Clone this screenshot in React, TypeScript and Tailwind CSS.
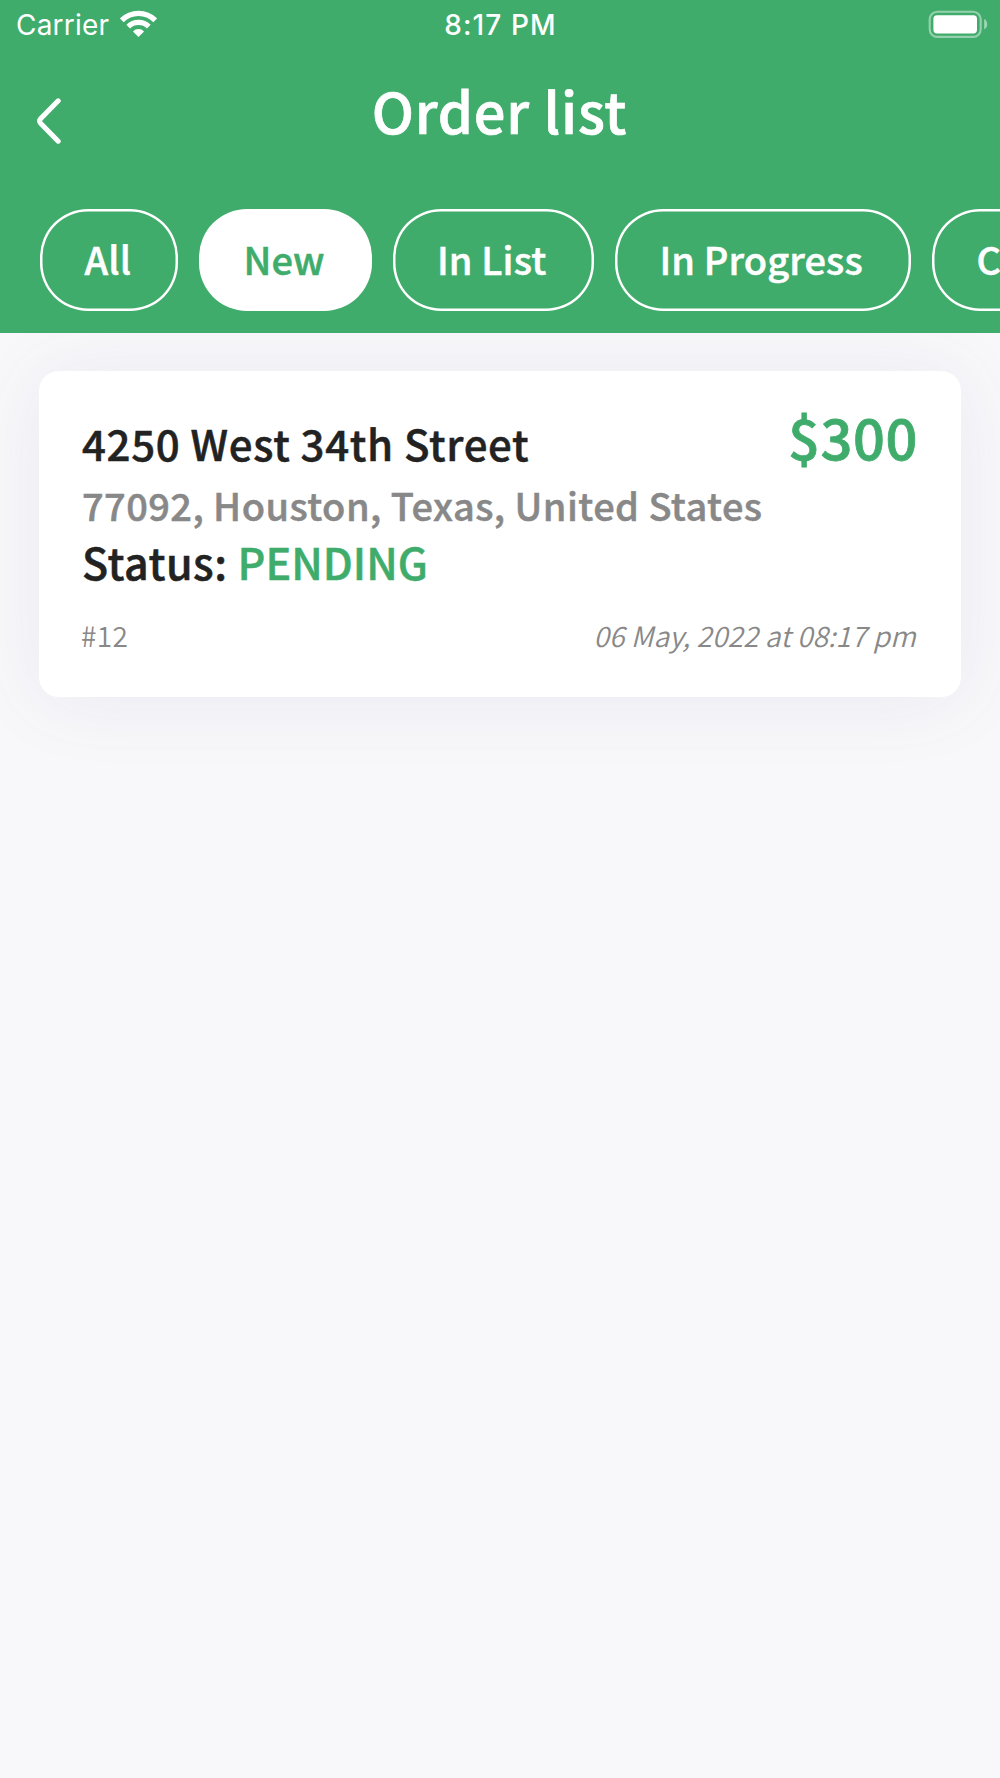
import { useState } from 'react';

interface Filter {
  label: string;
  width: string;
}

interface Order {
  id: number;
  street: string;
  address: string;
  status: string;
  price: string;
  date: string;
}

const filters: Filter[] = [
  { label: 'All', width: 'w-[138px]' },
  { label: 'New', width: 'w-[172.5px]' },
  { label: 'In List', width: 'w-[201.5px]' },
  { label: 'In Progress', width: 'w-[296px]' },
  { label: 'C', width: 'w-[280px]' },
];

const orders: Order[] = [
  {
    id: 12,
    street: '4250 West 34th Street',
    address: '77092, Houston, Texas, United States',
    status: 'PENDING',
    price: '$300',
    date: '06 May, 2022 at 08:17 pm',
  },
];

function WifiIcon() {
  return (
    <svg width="37" height="28" viewBox="0 0 37 28" fill="none" stroke="white">
      <path d="M1.8 10.3a23.6 23.6 0 0 1 33.4 0" strokeWidth="5.4" />
      <path d="M8.2 16.7a14.6 14.6 0 0 1 20.6 0" strokeWidth="5.2" />
      <path d="M18.5 27l-5.6-5.6a8 8 0 0 1 11.2 0z" fill="white" stroke="none" />
    </svg>
  );
}

function BatteryIcon() {
  return (
    <svg width="60" height="28" viewBox="0 0 60 28" fill="white">
      <rect x="1.7" y="1.7" width="51" height="25.2" rx="7.6" fill="none" stroke="white" strokeWidth="2.1" opacity="0.45" />
      <rect x="5.4" y="5.2" width="43.6" height="18.2" rx="3.6" />
      <path d="M56.2 9v10.4c1.8-.9 3-2.8 3-5.2s-1.2-4.3-3-5.2z" opacity="0.5" />
    </svg>
  );
}

function StatusBar() {
  return (
    <div className="grid h-[51px] grid-cols-[1fr_auto_1fr] items-center pl-4 pr-3 font-['Inter',sans-serif] text-[28px] leading-[51px] text-white">
      <div className="flex h-[51px] items-start">
        <span className="w-[104px] font-[380] tracking-[0.2px]">Carrier</span>
        <span className="pt-[10px]">
          <WifiIcon />
        </span>
      </div>
      <span className="mr-[3px] text-center font-medium tracking-[1.1px] whitespace-nowrap">8:17 PM</span>
      <div className="flex justify-end pb-[3px]">
        <BatteryIcon />
      </div>
    </div>
  );
}

function OrderCard({ order }: { order: Order }) {
  return (
    <article className="h-[326px] rounded-[20px] bg-white px-[43px] pt-10 shadow-[0_4px_76px_rgba(100,80,160,0.09)]">
      <div className="flex items-start justify-between [-webkit-text-stroke:0.5px]">
        <h2 className="text-[42px] leading-[64px] font-medium tracking-[0.67px] text-[#222]">{order.street}</h2>
        <span className="text-[56px] leading-[50px] font-medium tracking-[0.6px] text-[#40ac6c] [-webkit-text-stroke:0.8px]">
          {order.price}
        </span>
      </div>
      <p className="text-[38px] leading-[59px] font-medium tracking-[0.42px] text-[#888] [-webkit-text-stroke:0.5px]">
        {order.address}
      </p>
      <p className="flex text-[43px] leading-[55px] font-medium text-[#222] [-webkit-text-stroke:0.5px]">
        <span className="mr-[10px] tracking-[0.5px]">Status:</span>
        <span className="text-[#40ac6c]">{order.status}</span>
      </p>
      <div className="mt-[26px] flex justify-between text-[28px] leading-[41px] font-[350] text-[#888]">
        <span className="-ml-px tracking-[0.4px]">#{order.id}</span>
        <span className="mr-[2px] tracking-[0.1px] italic">{order.date}</span>
      </div>
    </article>
  );
}

export default function App() {
  const [active, setActive] = useState('New');

  return (
    <div className="min-h-[1778px] w-[1000px] overflow-hidden bg-[#f8f8fa] font-['Noto_Sans_CJK_SC',sans-serif]">
      <header className="relative z-10 h-[333px] bg-[#40ac6c]">
        <StatusBar />
        <div className="grid h-[118px] grid-cols-[100px_1fr_100px] items-center text-white">
          <button className="pt-[21px] pl-9" aria-label="Back">
            <svg width="26" height="46" viewBox="0 0 26 46" fill="none" stroke="white" strokeWidth="5" strokeLinecap="round">
              <path d="M22.2 2.8L4.8 20.5q-2.3 2.5 0 5L22.2 43.2" />
            </svg>
          </button>
          <h1 className="-ml-px text-center text-[56px] leading-[118px] font-medium tracking-[0.8px] [-webkit-text-stroke:0.7px]">
            Order list
          </h1>
        </div>
        <nav className="mt-10 flex gap-[21px] overflow-hidden pl-10">
          {filters.map(({ label, width }) => (
            <button
              key={label}
              onClick={() => setActive(label)}
              className={`${width} h-[102px] shrink-0 rounded-[48px] pb-[2px] pl-[44.5px] text-left text-[38px] leading-[100px] font-medium tracking-[0.1px] whitespace-nowrap [-webkit-text-stroke:0.5px] ${
                active === label ? 'bg-white text-[#40ac6c]' : 'text-white shadow-[inset_0_0_0_2.5px_#fff]'
              }`}
            >
              {label}
            </button>
          ))}
        </nav>
      </header>
      <main className="px-[39px] pt-[38px]">
        {orders.map((order) => (
          <OrderCard key={order.id} order={order} />
        ))}
      </main>
    </div>
  );
}
